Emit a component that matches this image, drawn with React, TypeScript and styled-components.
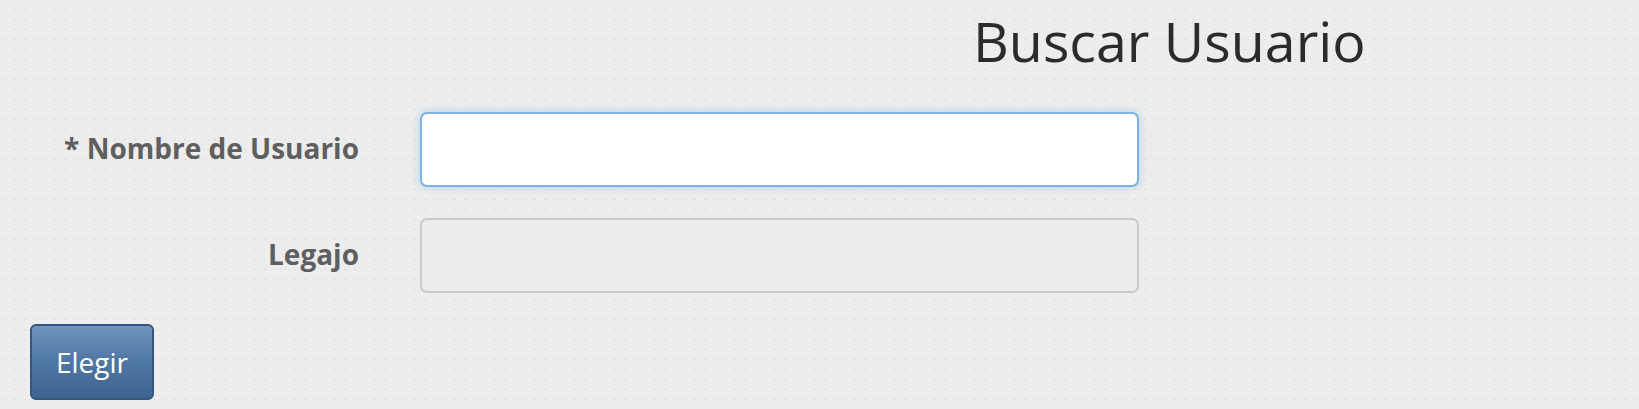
import React from "react";
import styled, { createGlobalStyle } from "styled-components";

const Global = createGlobalStyle`
  html, body { margin: 0; padding: 0; }
  body {
    background-color: #ededed;
    background-image: radial-gradient(circle at 5px 10px, #d8d8d8 1.3px, transparent 1.4px);
    background-size: 10px 10px;
    font-family: "Open Sans", "Liberation Sans", sans-serif;
    width: 1639px;
    height: 409px;
    overflow: hidden;
  }
`;

const Page = styled.div`
  display: flex;
  flex-direction: column;
  padding: 0 0 0 30px;
`;

const Title = styled.h1`
  margin: 0;
  padding: 10px 0 0 943px;
  font-size: 55.5px;
  font-weight: 400;
  line-height: 62px;
  color: #2b2b2b;
  height: 102px;
  box-sizing: border-box;
`;

const Form = styled.form`
  display: flex;
  flex-direction: column;
  gap: 31px;
  margin-top: 10px;
`;

const Row = styled.div`
  display: grid;
  grid-template-columns: 329px 719px;
  column-gap: 61px;
  align-items: center;
`;

const Label = styled.label`
  text-align: right;
  font-size: 28px;
  font-weight: 700;
  color: #5f5f5f;
  line-height: 38px;
  padding-bottom: 4px;
`;

const Input = styled.input<{ $focused?: boolean }>`
  box-sizing: border-box;
  height: 75px;
  width: 719px;
  border-radius: 7px;
  border: 2px solid ${(p) => (p.$focused ? "#7fb1e3" : "#cacaca")};
  background: ${(p) => (p.$focused ? "#ffffff" : "#ececec")};
  box-shadow: ${(p) =>
    p.$focused ? "0 0 8px rgba(102,175,233,0.45)" : "none"};
  outline: none;
  font-family: inherit;
  font-size: 28px;
  padding: 0 24px;
`;

const Button = styled.button`
  box-sizing: border-box;
  width: 124px;
  height: 76px;
  border-radius: 6px;
  border: 2px solid #34557c;
  background: linear-gradient(to bottom, #6f94bf 0%, #527aa6 45%, #3d6390 100%);
  color: #ffffff;
  font-family: "Open Sans", "Liberation Sans", sans-serif;
  font-size: 28px;
  font-weight: 400;
  padding: 0;
  cursor: pointer;
`;

export default function App() {
  return (
    <>
      <Global />
      <Page>
        <Title>Buscar Usuario</Title>
        <Form onSubmit={(e) => e.preventDefault()}>
          <Row>
            <Label>* Nombre de Usuario</Label>
            <Input $focused />
          </Row>
          <Row>
            <Label>Legajo</Label>
            <Input disabled />
          </Row>
          <div>
            <Button type="submit">Elegir</Button>
          </div>
        </Form>
      </Page>
    </>
  );
}
